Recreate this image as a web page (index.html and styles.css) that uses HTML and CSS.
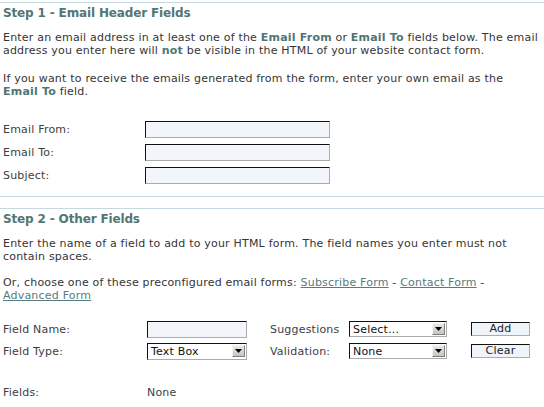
FILE: index.html
```html
<!DOCTYPE html>
<html lang="en">
<head>
<meta charset="utf-8">
<title>Email Form Builder</title>
<link rel="stylesheet" href="styles.css">
</head>
<body>
<div class="page">
  <section class="step step-1">
    <h2 class="step-title">Step 1 - Email Header Fields</h2>
    <p class="intro">Enter an email address in at least one of the <b class="hl">Email From</b> or <b class="hl">Email To</b> fields below. The email<br>address you enter here will <b class="hl">not</b> be visible in the HTML of your website contact form.</p>
    <p class="intro intro-spaced">If you want to receive the emails generated from the form, enter your own email as the<br><b class="hl">Email To</b> field.</p>
    <div class="header-fields">
      <label class="field-label">Email From:</label>
      <input class="text-input wide" type="text">
      <label class="field-label">Email To:</label>
      <input class="text-input wide" type="text">
      <label class="field-label">Subject:</label>
      <input class="text-input wide" type="text">
    </div>
  </section>

  <section class="step step-2">
    <h2 class="step-title">Step 2 - Other Fields</h2>
    <p class="intro">Enter the name of a field to add to your HTML form. The field names you enter must not<br>contain spaces.</p>
    <p class="intro">Or, choose one of these preconfigured email forms: <a class="link" href="#">Subscribe Form</a> - <a class="link" href="#">Contact Form</a> -<br><a class="link" href="#">Advanced Form</a></p>
    <div class="other-fields">
      <label class="field-label">Field Name:</label>
      <div class="cell"><input class="text-input narrow" type="text"></div>
      <label class="field-label">Suggestions</label>
      <div class="cell">
        <div class="select">
          <span class="select-text">Select...</span>
          <span class="select-arrow"><svg width="7" height="4" viewBox="0 0 7 4"><path d="M0 0H7L3.5 4Z" fill="#000"/></svg></span>
        </div>
      </div>
      <div class="cell"><button class="btn" type="button">Add</button></div>

      <label class="field-label">Field Type:</label>
      <div class="cell">
        <div class="select narrow-select">
          <span class="select-text">Text Box</span>
          <span class="select-arrow"><svg width="7" height="4" viewBox="0 0 7 4"><path d="M0 0H7L3.5 4Z" fill="#000"/></svg></span>
        </div>
      </div>
      <label class="field-label">Validation:</label>
      <div class="cell">
        <div class="select">
          <span class="select-text">None</span>
          <span class="select-arrow"><svg width="7" height="4" viewBox="0 0 7 4"><path d="M0 0H7L3.5 4Z" fill="#000"/></svg></span>
        </div>
      </div>
      <div class="cell"><button class="btn" type="button">Clear</button></div>
    </div>
    <div class="fields-list">
      <span class="field-label">Fields:</span>
      <span class="fields-value">None</span>
    </div>
  </section>
</div>
</body>
</html>
```

FILE: styles.css
```css
html, body {
  margin: 0;
  padding: 0;
  background: #ffffff;
}

body {
  font-family: "DejaVu Sans", Verdana, sans-serif;
  font-size: 11px;
  letter-spacing: 0.2px;
  color: #353535;
}

.page {
  padding-top: 2px;
}

.step {
  border-top: 1px solid #c4dae0;
  padding: 3px 0 9px 3px;
}

.step-1 {
  border-bottom: 1px solid #c4dae0;
}

.step-2 {
  margin-top: 11px;
}

.step-title {
  margin: 0 0 10px 0;
  font-size: 12px;
  line-height: 15px;
  font-weight: bold;
  letter-spacing: -0.15px;
  color: #527676;
}

.intro {
  margin: 0 0 13px 0;
  line-height: 13px;
  white-space: nowrap;
}

.intro-spaced {
  margin-top: 15px;
}

.hl {
  color: #4f7575;
  font-weight: bold;
}

.link {
  color: #587b80;
  text-decoration: underline;
}

.header-fields {
  margin-top: 20px;
  display: grid;
  grid-template-columns: 142px 185px;
  grid-auto-rows: 23px;
  align-items: center;
}

.field-label {
  color: #3e3e3e;
  line-height: 13px;
}

.text-input {
  box-sizing: border-box;
  height: 17px;
  margin: 0;
  padding: 0 3px;
  border-style: solid;
  border-width: 1px;
  border-color: #111111 #ababab #ababab #111111;
  background: #f2f6fa;
  font-family: inherit;
  font-size: 11px;
}

.wide {
  width: 185px;
}

.narrow {
  width: 100px;
}

.other-fields {
  margin-top: 16px;
  display: grid;
  grid-template-columns: 144px 123px 79px 122px 59px;
  grid-auto-rows: 22px;
  align-items: center;
}

.cell {
  display: flex;
  align-items: center;
}

.select {
  box-sizing: border-box;
  width: 98px;
  height: 16px;
  display: flex;
  align-items: center;
  border-style: solid;
  border-width: 1px;
  border-color: #111111 #ababab #ababab #111111;
  background: #ffffff;
}

.narrow-select {
  width: 100px;
  height: 17px;
}

.select-text {
  flex: 1;
  padding-left: 3px;
  color: #111111;
  line-height: 13px;
}

.select-arrow {
  box-sizing: border-box;
  width: 13px;
  height: 12px;
  margin-right: 1px;
  display: flex;
  align-items: center;
  justify-content: center;
  border-style: solid;
  border-width: 1px;
  border-color: #f4f4f0 #7f7f7f #7f7f7f #f4f4f0;
  background: linear-gradient(#e9e7e1, #c8c5bd);
}

.btn {
  box-sizing: border-box;
  width: 59px;
  height: 14px;
  margin: 0;
  padding: 0;
  border-style: solid;
  border-width: 1px;
  border-color: #111111 #ababab #ababab #111111;
  background: #eef4fa;
  font-family: inherit;
  font-size: 11px;
  letter-spacing: 0.2px;
  line-height: 12px;
  color: #222222;
}

.fields-list {
  margin-top: 19px;
  height: 22px;
  display: grid;
  grid-template-columns: 144px auto;
  align-items: center;
}

.fields-value {
  color: #3e3e3e;
}
```
